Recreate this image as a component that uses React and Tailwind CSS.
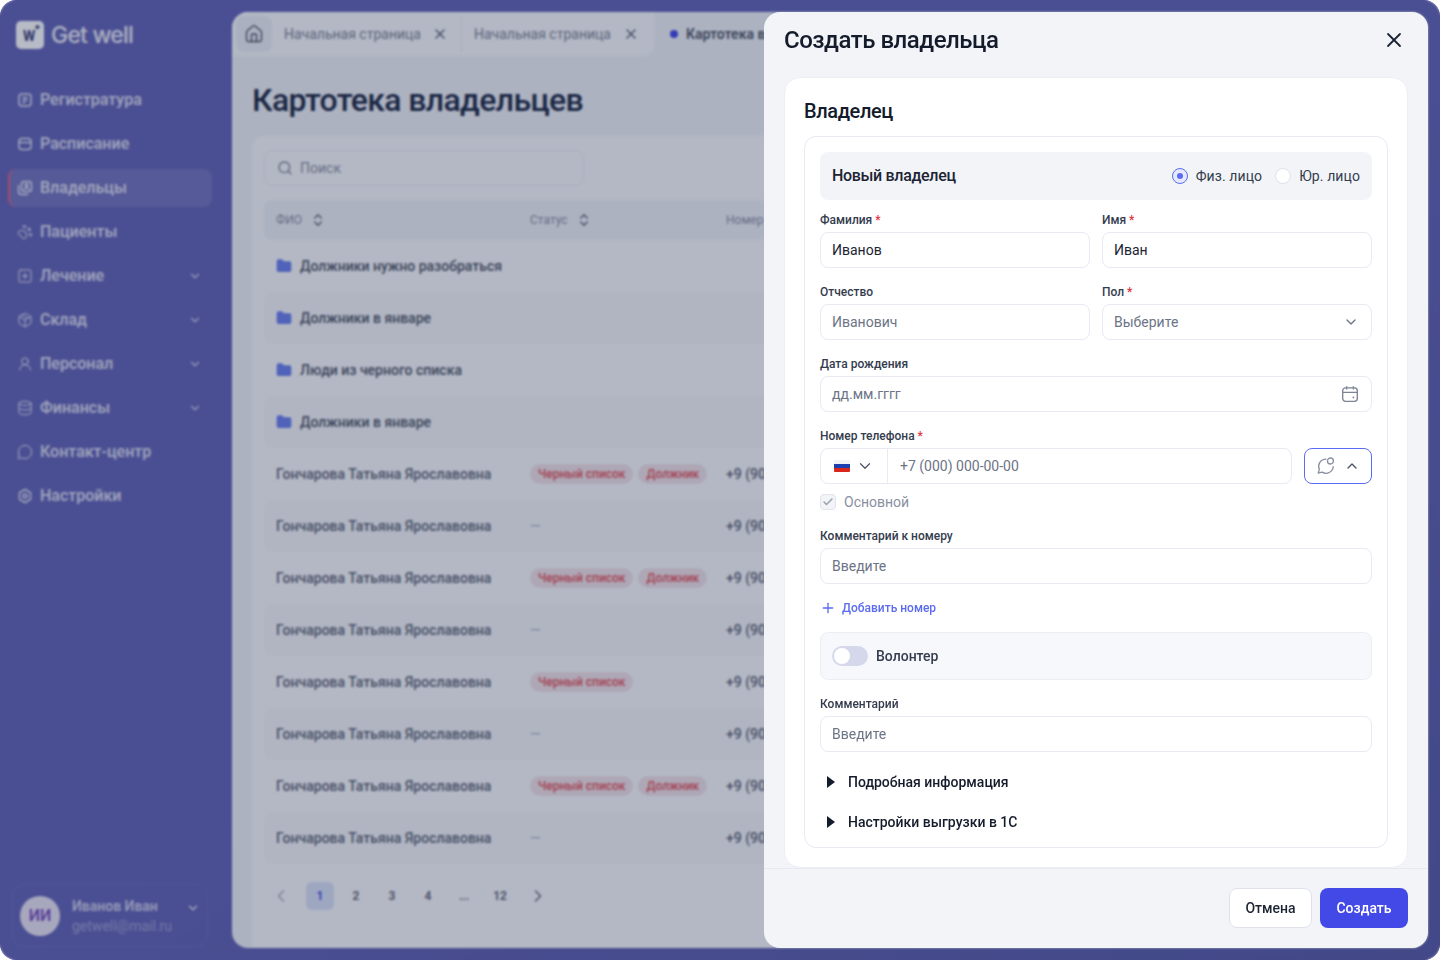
import { ChevronDown, ChevronUp, ChevronLeft, ChevronRight, ChevronsUpDown, Database, Folder, House, MessageCircle, Package, PawPrint, Plus, Search, SquarePlus, UserRound, X, Check } from 'lucide-react';

const SheetIcon = (props) => (
  <svg viewBox="0 0 16 16" fill="none" stroke="currentColor" strokeWidth="1.3" {...props}>
    <rect x="2" y="2" width="12" height="12" rx="3" />
    <path d="M5.5 5.5h5M5.5 8h5M5.5 10.5h3" />
  </svg>
);

const ScheduleIcon = (props) => (
  <svg viewBox="0 0 16 16" fill="none" stroke="currentColor" strokeWidth="1.3" {...props}>
    <rect x="2" y="2.5" width="12" height="11" rx="3" />
    <path d="M2 6.5h12" />
  </svg>
);

const OwnersIcon = (props) => (
  <svg viewBox="0 0 16 16" fill="none" stroke="currentColor" strokeWidth="1.3" {...props}>
    <rect x="4.5" y="1.5" width="10" height="10" rx="2.5" />
    <path d="M1.5 5v6.5a3 3 0 0 0 3 3H11" />
    <circle cx="9.5" cy="5" r="1.3" />
    <path d="M7 9.5c.4-1.3 1.3-1.8 2.5-1.8s2.100.5 2.500 1.800" />
  </svg>
);

const HexIcon = (props) => (
  <svg viewBox="0 0 16 16" fill="none" stroke="currentColor" strokeWidth="1.3" {...props}>
    <path d="M8 1.500l5.500 3.200v6.600L8 14.500l-5.500-3.200V4.700z" strokeLinejoin="round" />
    <circle cx="8" cy="8" r="2" />
  </svg>
);

const CalendarIcon = (props) => (
  <svg viewBox="0 0 16 16" fill="none" stroke="currentColor" strokeWidth="1.2" {...props}>
    <rect x="1.500" y="2.500" width="13" height="12" rx="2.500" />
    <path d="M1.500 6.500h13M5 1v3M11 1v3" />
    <circle cx="11" cy="11" r="0.8" fill="currentColor" stroke="none" />
  </svg>
);

const ChatIcon = (props) => (
  <svg viewBox="0 0 18 18" fill="none" stroke="currentColor" strokeWidth="1.2" {...props}>
    <path d="M9 2.800a6.500 6.500 0 0 0-6 9.200l-1 3.500 3.500-1A6.500 6.500 0 0 0 15.500 9.500" strokeLinecap="round" strokeLinejoin="round" />
    <circle cx="13" cy="4.500" r="2.700" />
  </svg>
);

const navItems = [
  { label: 'Регистратура', icon: SheetIcon },
  { label: 'Расписание', icon: ScheduleIcon },
  { label: 'Владельцы', icon: OwnersIcon, active: true },
  { label: 'Пациенты', icon: PawPrint },
  { label: 'Лечение', icon: SquarePlus, more: true },
  { label: 'Склад', icon: Package, more: true },
  { label: 'Персонал', icon: UserRound, more: true },
  { label: 'Финансы', icon: Database, more: true },
  { label: 'Контакт-центр', icon: MessageCircle },
  { label: 'Настройки', icon: HexIcon },
];

const folders = ['Должники нужно разобраться', 'Должники в январе', 'Люди из черного списка', 'Должники в январе'];

const people = [
  ['Черный список', 'Должник'],
  [],
  ['Черный список', 'Должник'],
  [],
  ['Черный список'],
  [],
  ['Черный список', 'Должник'],
  [],
];

function Sidebar() {
  return (
    <aside className="flex w-[232px] shrink-0 flex-col">
      <div className="mt-[21px] flex h-[28px] items-center gap-[7px] pl-4">
        <div className="relative flex h-[28px] w-[28px] items-center justify-center rounded-[5px] bg-white pr-[2px] pt-[2px] text-[14px] font-bold leading-none text-[#3a3f78]">
          W
          <span className="absolute right-[3px] top-[3px] text-[8px] leading-none">✦</span>
        </div>
        <span className="font-['Inter'] text-[23px] font-medium tracking-[-0.8px] text-white/90">Get well</span>
      </div>
      <nav className="mt-[32px] flex flex-col gap-[6px] pl-2 pr-5">
        {navItems.map((item) => (
          <div
            key={item.label}
            className={`flex h-[38px] items-center gap-[7px] pr-[10px] ${item.active ? 'rounded-lg border-l-2 border-[#e0607a] bg-white/10 pl-[7px]' : 'pl-[9px]'}`}
          >
            <item.icon className="h-[16px] w-[16px] shrink-0 text-white/80" strokeWidth={1.5} />
            <span className="flex-1 text-[16px] font-medium text-white/80">{item.label}</span>
            {item.more && <ChevronDown className="h-[14px] w-[14px] text-white/70" />}
          </div>
        ))}
      </nav>
      <div className="mb-[13px] ml-3 mr-[24px] mt-auto flex h-[63px] items-center gap-3 rounded-xl border border-white/5 px-[7px]">
        <div className="flex h-[40px] w-[40px] items-center justify-center rounded-full bg-[#e9e4f2] text-[16px] font-semibold text-[#7a4fc0]">ИИ</div>
        <div className="flex-1">
          <div className="text-[14px] font-semibold leading-[20px] text-white/70">Иванов Иван</div>
          <div className="text-[14px] leading-[20px] text-white/40">getwell@mail.ru</div>
        </div>
        <ChevronDown className="mb-4 h-[14px] w-[14px] text-white/80" strokeWidth={2.500} />
      </div>
    </aside>
  );
}

function Tab({ label }) {
  return (
    <div className="flex w-[190px] items-center border-r border-[#e5e7ef] pl-3 pr-[13px] last:border-0">
      <span className="flex-1 text-[14px] text-[#7d8494]">{label}</span>
      <X className="h-[16px] w-[16px] text-[#5d6474]" strokeWidth={2} />
    </div>
  );
}

function Badge({ children }) {
  return <span className="rounded-full bg-[#f3e3e8] px-2 py-[2px] text-[12px] font-medium leading-[16px] text-[#e2525a]">{children}</span>;
}

function OwnersPage() {
  return (
    <main className="my-3 mr-3 flex min-w-0 flex-1 flex-col overflow-hidden rounded-2xl bg-[#f1f3f8]">
      <div className="flex h-[44px] shrink-0">
        <div className="flex rounded-br-xl bg-[#fafbfd] py-1 pl-1 pr-[2px]">
          <div className="flex h-[36px] w-[36px] items-center justify-center rounded-lg bg-[#eef0f6]">
            <House className="h-[20px] w-[20px] text-[#4d5566]" strokeWidth={1.6} />
          </div>
          <Tab label="Начальная страница" />
          <Tab label="Начальная страница" />
        </div>
        <div className="ml-4 flex items-center gap-2">
          <span className="h-[8px] w-[8px] rounded-full bg-[#4349e6]" />
          <span className="whitespace-nowrap text-[14px] font-semibold text-[#4c5363]">Картотека владельцев</span>
        </div>
      </div>
      <h1 className="ml-5 mt-[24px] text-[32px] font-medium leading-[40px] tracking-[-0.02em] text-[#1e2a44]">Картотека владельцев</h1>
      <div className="ml-5 mt-4 flex-1 rounded-t-xl bg-[#fbfbfd] px-3 pt-[14px]">
        <div className="flex h-[36px] w-[320px] items-center gap-[7px] rounded-lg border border-[#ecedf4] px-3">
          <Search className="h-[16px] w-[16px] text-[#7d8494]" />
          <span className="text-[14px] text-[#8a90a0]">Поиск</span>
        </div>
        <div className="mt-[14px] flex h-[40px] items-center rounded-lg bg-[#f1f3f8] pl-3 text-[12px] text-[#8a90a0]">
          <div className="flex w-[254px] items-center gap-2">ФИО <ChevronsUpDown className="h-[16px] w-[16px] text-[#5d6474]" /></div>
          <div className="flex w-[196px] items-center gap-2">Статус <ChevronsUpDown className="h-[16px] w-[16px] text-[#5d6474]" /></div>
          <div className="whitespace-nowrap">Номер телефона</div>
        </div>
        <div>
          {folders.map((name, i) => (
            <div key={i} className={`flex h-[52px] items-center gap-[8px] rounded-lg pl-3 ${i % 2 ? 'bg-[#f6f7fa]' : ''}`}>
              <Folder className="h-[16px] w-[16px] fill-[#6c80ee] text-[#6c80ee]" />
              <span className="text-[14px] font-medium text-[#4c5363]">{name}</span>
            </div>
          ))}
          {people.map((tags, i) => (
            <div key={i} className={`flex h-[52px] items-center rounded-lg pl-3 ${i % 2 ? 'bg-[#f6f7fa]' : ''}`}>
              <div className="w-[254px] text-[14px] font-medium text-[#5d6474]">Гончарова Татьяна Ярославовна</div>
              <div className="flex w-[196px] items-center gap-[5px]">
                {tags.length ? tags.map((t) => <Badge key={t}>{t}</Badge>) : <span className="text-[14px] text-[#b0b6c4]">—</span>}
              </div>
              <div className="whitespace-nowrap text-[14px] font-medium text-[#5d6474]">+9 (900) 000-00-00</div>
            </div>
          ))}
        </div>
        <div className="mt-[18px] flex items-center gap-2 pl-[7px] text-[12px] font-semibold text-[#5d6474]">
          <ChevronLeft className="mr-[7px] h-[20px] w-[20px] text-[#a5abb9]" strokeWidth={1.6} />
          <span className="flex h-[28px] w-[28px] items-center justify-center rounded-md bg-[#dbe3f7] text-[#4349e6]">1</span>
          {['2', '3', '4', '...', '12'].map((p) => (
            <span key={p} className="flex h-[28px] w-[28px] items-center justify-center">{p}</span>
          ))}
          <ChevronRight className="ml-[6px] h-[20px] w-[20px]" strokeWidth={1.6} />
        </div>
      </div>
    </main>
  );
}

function Field({ label, required, children, className = '' }) {
  return (
    <div className={`flex flex-col gap-1 ${className}`}>
      <label className="text-[12px] font-medium leading-[16px] text-[#343c4e]">
        {label}
        {required && <span className="text-[#e2343d]"> *</span>}
      </label>
      {children}
    </div>
  );
}

function Input({ children, muted, right }) {
  return (
    <div className="flex h-[36px] items-center justify-between rounded-lg border border-[#e8e9f3] bg-white pl-[11px] pr-3">
      <span className={`text-[14px] ${muted ? 'text-[#6c7486]' : 'text-[#1c2433]'}`}>{children}</span>
      {right}
    </div>
  );
}

function Radio({ label, checked }) {
  return (
    <div className="flex items-center gap-2">
      <span className={`flex h-[16px] w-[16px] items-center justify-center rounded-full border ${checked ? 'border-[#5b6cf0] bg-[#e6e9fd]' : 'border-[#dfe1ec] bg-white'}`}>
        {checked && <span className="h-[6px] w-[6px] rounded-full bg-[#5b6cf0]" />}
      </span>
      <span className="text-[14px] tracking-[0.1px] text-[#343c4e]">{label}</span>
    </div>
  );
}

function Disclosure({ children }) {
  return (
    <div className="flex h-[24px] items-center gap-[13px] pl-[7px]">
      <span className="h-0 w-0 border-y-[6px] border-l-[8px] border-y-transparent border-l-[#141b2b]" />
      <span className="text-[14px] font-medium text-[#141b2b]">{children}</span>
    </div>
  );
}

function OwnerModal() {
  return (
    <section className="flex h-full w-[664px] flex-col overflow-hidden rounded-2xl bg-[#f2f4f8]">
      <header className="flex h-[65px] shrink-0 items-start justify-between pl-5 pr-[22px] pt-[12px]">
        <h2 className="text-[24px] font-medium leading-[32px] tracking-[-0.02em] text-[#141b2b]">Создать владельца</h2>
        <X className="mt-[4px] h-[24px] w-[24px] text-[#1c2433]" strokeWidth={1.8} />
      </header>
      <div className="mx-[20px] flex-1 rounded-2xl border border-[#eceef5] bg-white px-[19px] pt-[20px]">
        <h3 className="text-[20px] font-medium leading-[26px] tracking-[-0.02em] text-[#141b2b]">Владелец</h3>
        <div className="mt-[12px] rounded-xl border border-[#e8e9f3] px-[15px] pt-[15px]">
          <div className="flex h-[48px] items-center justify-between rounded-lg bg-[#f2f4f8] px-3">
            <span className="text-[16px] font-medium tracking-[-0.02em] text-[#1c2433]">Новый владелец</span>
            <div className="flex items-center gap-[13px]">
              <Radio label="Физ. лицо" checked />
              <Radio label="Юр. лицо" />
            </div>
          </div>
          <div className="mt-[12px] grid grid-cols-2 gap-x-3 gap-y-4">
            <Field label="Фамилия" required><Input>Иванов</Input></Field>
            <Field label="Имя" required><Input>Иван</Input></Field>
            <Field label="Отчество"><Input muted>Иванович</Input></Field>
            <Field label="Пол" required>
              <Input muted right={<ChevronDown className="h-[16px] w-[16px] text-[#6c7486]" />}>Выберите</Input>
            </Field>
            <Field label="Дата рождения" className="col-span-2">
              <Input muted right={<CalendarIcon className="h-[18px] w-[18px] text-[#7d8494]" />}>дд.мм.гггг</Input>
            </Field>
            <Field label="Номер телефона" required className="col-span-2">
              <div className="flex gap-3">
                <div className="flex h-[36px] flex-1 items-center rounded-lg border border-[#e8e9f3]">
                  <div className="flex h-full w-[67px] shrink-0 items-center gap-[6px] border-r border-[#e8e9f3] pl-[13px]">
                    <div className="flex h-[12px] w-[16px] flex-col overflow-hidden rounded-[1px]">
                      <span className="flex-1 bg-[#f2f2f5]" />
                      <span className="flex-1 bg-[#1c3fb0]" />
                      <span className="flex-1 bg-[#d8261c]" />
                    </div>
                    <ChevronDown className="h-[18px] w-[18px] text-[#4c5363]" strokeWidth={1.6} />
                  </div>
                  <span className="pl-3 text-[14px] text-[#6c7486]">+7 (000) 000-00-00</span>
                </div>
                <div className="flex h-[36px] w-[68px] items-center justify-center gap-[8px] rounded-lg border border-[#5b6cf0]">
                  <ChatIcon className="h-[20px] w-[20px] text-[#8a90a0]" />
                  <ChevronUp className="h-[16px] w-[16px] text-[#4c5363]" strokeWidth={2} />
                </div>
              </div>
              <div className="mt-[4px] flex h-[20px] items-center gap-2">
                <span className="flex h-[16px] w-[16px] items-center justify-center rounded-[4px] border border-[#e2e4ee] bg-[#f2f4f8]">
                  <Check className="h-[12px] w-[12px] text-[#9aa0ae]" strokeWidth={3} />
                </span>
                <span className="text-[14px] text-[#8a90a0]">Основной</span>
              </div>
            </Field>
            <Field label="Комментарий к номеру" className="col-span-2"><Input muted>Введите</Input></Field>
          </div>
          <div className="mt-[12px] flex h-[24px] items-center gap-[6px]">
            <Plus className="h-[16px] w-[16px] text-[#5b6cf0]" strokeWidth={2} />
            <span className="text-[12px] font-medium text-[#5b6cf0]">Добавить номер</span>
          </div>
          <div className="mt-[12px] flex h-[48px] items-center gap-2 rounded-lg border border-[#eceef5] bg-[#f7f8fc] px-[11px]">
            <span className="flex h-[20px] w-[36px] items-center rounded-full bg-[#d5d8ea] px-[2px]">
              <span className="h-[16px] w-[16px] rounded-full bg-white" />
            </span>
            <span className="text-[14px] font-medium text-[#343c4e]">Волонтер</span>
          </div>
          <Field label="Комментарий" className="mt-[16px]"><Input muted>Введите</Input></Field>
          <div className="mt-[18px] flex flex-col gap-4 pb-[13px]">
            <Disclosure>Подробная информация</Disclosure>
            <Disclosure>Настройки выгрузки в 1С</Disclosure>
          </div>
        </div>
      </div>
      <footer className="flex h-[80px] shrink-0 items-center justify-end gap-2 border-t border-[#e8eaf2] pb-[1px] pr-5">
        <button className="h-[40px] w-[83px] rounded-lg border border-[#dfe1ec] bg-white text-[14px] font-medium text-[#1c2433]">Отмена</button>
        <button className="h-[40px] w-[88px] rounded-lg bg-[#4349e6] text-[14px] font-medium text-white">Создать</button>
      </footer>
    </section>
  );
}

export default function App() {
  return (
    <div className="relative flex h-screen w-full overflow-hidden rounded-2xl bg-linear-to-br from-[#6465b7] via-[#6465b7] to-[#585ba6] font-['Roboto','Noto_Sans',sans-serif]">
      <Sidebar />
      <OwnersPage />
      <div className="absolute inset-0 flex justify-end bg-[#111e43]/30 py-3 pr-3 backdrop-blur-[1px]">
        <OwnerModal />
      </div>
    </div>
  );
}
